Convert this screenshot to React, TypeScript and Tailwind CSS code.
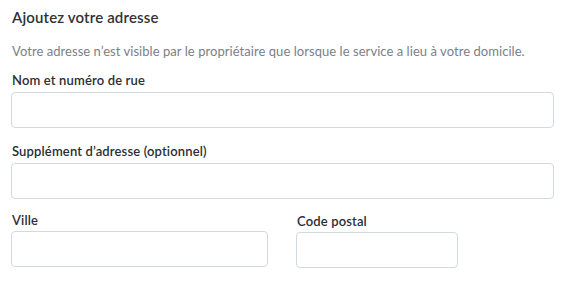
import React from 'react';

const Field: React.FC<{ label: string; className?: string; gap?: string }> = ({ label, className = '', gap = 'mt-[3px]' }) => (
  <div className={className}>
    <label className="block pl-[1px] text-[13px] leading-[18px] font-semibold tracking-[0.15px] text-[#2b2e33]">{label}</label>
    <input type="text" className={`${gap} block w-full h-[36px] rounded-[4px] border border-[#d3d9e0] bg-white px-3 text-[13px] outline-none`} />
  </div>
);

export default function App() {
  return (
    <div className="w-[578px] h-[290px] bg-white px-[11px] pt-[7px]" style={{ fontFamily: 'Lato, "Noto Sans", sans-serif' }}>
      <h2 className="pl-[1px] text-[15px] leading-[20px] font-semibold tracking-[0.15px] text-[#2f3237]">Ajoutez votre adresse</h2>
      <p className="mt-[15px] pl-[1px] text-[13px] leading-[18px] tracking-[0.05px] text-[#7c8088]">
        Votre adresse n’est visible par le propriétaire que lorsque le service a lieu à votre domicile.
      </p>
      <Field label="Nom et numéro de rue" className="mt-[11px] w-[543px]" />
      <Field label="Supplément d’adresse (optionnel)" className="mt-[14px] w-[543px]" />
      <div className="mt-[12px] flex gap-[28px]">
        <Field label="Ville" className="w-[257px]" gap="mt-[2px]" />
        <Field label="Code postal" className="w-[162px] mt-[1px]" gap="mt-[2px]" />
      </div>
    </div>
  );
}
